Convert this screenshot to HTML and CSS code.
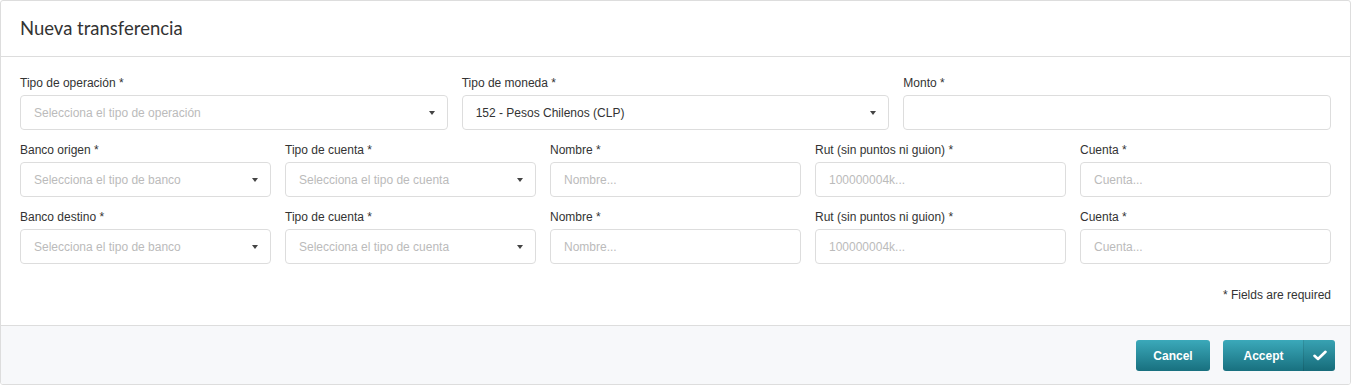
FILE: index.html
```html
<!DOCTYPE html>
<html lang="es">
<head>
  <meta charset="UTF-8" />
  <title>Nueva transferencia</title>
  <link rel="stylesheet" href="styles.css">
</head>
<body>
  <div class="modal">
    <div class="modal-header">
      <h2>Nueva transferencia</h2>
    </div>
    <form class="modal-body" id="transferForm">
      <div class="row row-3">
        <div class="field">
          <label>Tipo de operación *</label>
          <div class="select placeholder">Selecciona el tipo de operación<span class="caret"></span></div>
        </div>
        <div class="field">
          <label>Tipo de moneda *</label>
          <div class="select">152 - Pesos Chilenos (CLP)<span class="caret"></span></div>
        </div>
        <div class="field">
          <label>Monto *</label>
          <input type="text" name="monto" />
        </div>
      </div>
      <div class="row row-5">
        <div class="field">
          <label>Banco origen *</label>
          <div class="select placeholder">Selecciona el tipo de banco<span class="caret"></span></div>
        </div>
        <div class="field">
          <label>Tipo de cuenta *</label>
          <div class="select placeholder">Selecciona el tipo de cuenta<span class="caret"></span></div>
        </div>
        <div class="field">
          <label>Nombre *</label>
          <input type="text" name="nombreOrigen" placeholder="Nombre..." />
        </div>
        <div class="field">
          <label>Rut (sin puntos ni guion) *</label>
          <input type="text" name="rutOrigen" placeholder="100000004k..." />
        </div>
        <div class="field">
          <label>Cuenta *</label>
          <input type="text" name="cuentaOrigen" placeholder="Cuenta..." />
        </div>
      </div>
      <div class="row row-5">
        <div class="field">
          <label>Banco destino *</label>
          <div class="select placeholder">Selecciona el tipo de banco<span class="caret"></span></div>
        </div>
        <div class="field">
          <label>Tipo de cuenta *</label>
          <div class="select placeholder">Selecciona el tipo de cuenta<span class="caret"></span></div>
        </div>
        <div class="field">
          <label>Nombre *</label>
          <input type="text" name="nombreDestino" placeholder="Nombre..." />
        </div>
        <div class="field">
          <label>Rut (sin puntos ni guion) *</label>
          <input type="text" name="rutDestino" placeholder="100000004k..." />
        </div>
        <div class="field">
          <label>Cuenta *</label>
          <input type="text" name="cuentaDestino" placeholder="Cuenta..." />
        </div>
      </div>
      <p class="required-note">* Fields are required</p>
    </form>
    <div class="modal-footer">
      <button type="button" class="btn">Cancel</button>
      <button type="submit" class="btn btn-accept">
        <span class="btn-label">Accept</span>
        <span class="btn-icon">
          <svg width="14" height="11" viewBox="0 0 14 11"><path d="M1.5 5.8 L5 9 L12.5 1.8" fill="none" stroke="#fff" stroke-width="2.6" stroke-linecap="round" stroke-linejoin="round"/></svg>
        </span>
      </button>
    </div>
  </div>
</body>
</html>
```

FILE: styles.css
```css
body { margin: 0; font-family: "Liberation Sans", Arial, sans-serif; font-size: 12px; color: #333; background: #fff; }
.modal { width: 1349px; height: 383px; border: 1px solid #ddd; border-radius: 3px; display: flex; flex-direction: column; overflow: hidden; }
.modal-header { height: 55px; border-bottom: 1px solid #ddd; padding: 0 19px; display: flex; align-items: center; }
.modal-header h2 { margin: 0 0 1px; font-family: Lato, "Liberation Sans", sans-serif; font-size: 18.5px; font-weight: normal; color: #333; }
.modal-body { flex: 1; padding: 19px 19px 0 19px; }
.row { display: grid; gap: 14px; margin-bottom: 13px; }
.row-3 { grid-template-columns: repeat(3, 1fr); }
.row-5 { grid-template-columns: repeat(5, 1fr); }
label { display: block; line-height: 15px; margin-bottom: 4px; color: #333; }
input, .select {
  box-sizing: border-box;
  width: 100%;
  height: 35px;
  padding: 0 13px;
  border: 1px solid #ddd;
  border-radius: 4px;
  font-family: "Liberation Sans", Arial, sans-serif;
  font-size: 12px;
  color: #333;
  background: #fff;
  outline: none;
}
input::placeholder { color: #bbb; }
.select { display: flex; align-items: center; position: relative; }
.select.placeholder { color: #bbb; }
.caret {
  position: absolute;
  right: 12px;
  top: 15px;
  width: 0;
  height: 0;
  border-left: 3.5px solid transparent;
  border-right: 3.5px solid transparent;
  border-top: 4px solid #444;
}
.required-note { margin: 24px 0 0; text-align: right; line-height: 15px; }
.modal-footer {
  height: 59px;
  box-sizing: border-box;
  border-top: 1px solid #ddd;
  background: #f7f8fa;
  display: flex;
  justify-content: flex-end;
  align-items: flex-start;
  gap: 13px;
  padding: 14px 15px 0;
}
.btn {
  height: 31px;
  width: 74px;
  padding: 0;
  border: none;
  border-radius: 3px;
  background: linear-gradient(#3ba9ba, #18707f);
  color: #fff;
  font-family: "Liberation Sans", Arial, sans-serif;
  font-size: 12px;
  font-weight: bold;
  cursor: pointer;
}
.btn-accept { width: 112px; display: flex; align-items: stretch; }
.btn-label { flex: 1; display: flex; align-items: center; justify-content: center; padding-left: 1px; }
.btn-icon { width: 31px; display: flex; align-items: center; justify-content: center; border-left: 1px solid rgba(0,0,0,0.1); background: rgba(0,0,0,0.04); border-radius: 0 3px 3px 0; }
```
